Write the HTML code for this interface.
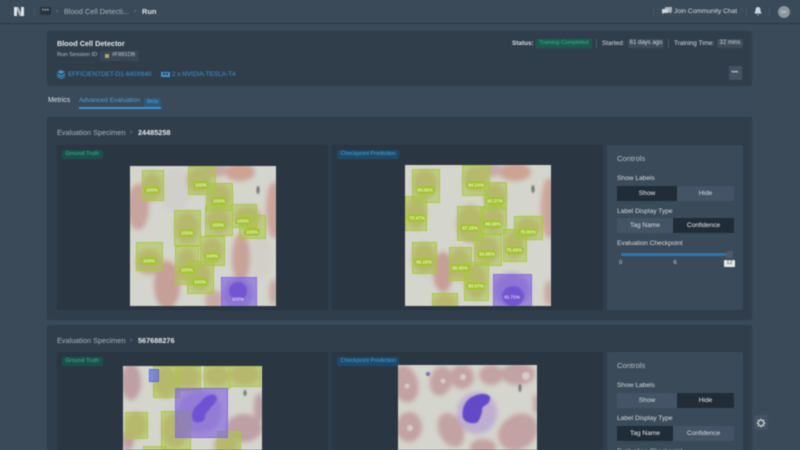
<!DOCTYPE html>
<html><head><meta charset="utf-8">
<style>
*{box-sizing:border-box}
html,body{margin:0;padding:0;width:800px;height:450px;overflow:hidden;background:#3a4a59}
body{font-family:"Liberation Sans",sans-serif;color:#d5dbe0;position:relative}
#w{position:absolute;left:0;top:0;width:800px;height:450px;overflow:hidden;filter:blur(.5px)}
.a{position:absolute}
.t{position:absolute;white-space:nowrap;line-height:1}
.panel{position:absolute;background:#2a3742}
.sec{position:absolute;left:47px;width:705px;background:#303e4c;border-radius:2px}
.tag{position:absolute;border-radius:2px;font-size:5.7px;line-height:9px;height:9px;padding:0 3.5px;white-space:nowrap}
.g{background:#1c4f4b;color:#35b98a}
.bl{background:#1d4a69;color:#4ba3dc}
.ctl{position:absolute;left:607px;width:136px;background:#3a4a59;border-radius:2px}
.seg{position:absolute;height:15px;font-size:6.6px;line-height:15px;text-align:center;color:#d5dbe0;background:#445464}
.on{background:#212c36;color:#e8ecef}
.chip{position:absolute;background:#3f4d5a;border-radius:2px;font-size:6px;color:#cdd4da;line-height:9px;height:9px;text-align:center;white-space:nowrap}
svg{position:absolute;overflow:hidden}
svg text{font-family:"Liberation Sans",sans-serif;font-size:4.6px;fill:#fff;text-anchor:middle}
.sep{position:absolute;width:1px;background:#4a5967}
</style></head><body><div id="w">

<!-- header -->
<div class="a" style="left:0;top:23px;width:800px;height:1px;background:#2c3946"></div>
<svg style="left:13px;top:6px" width="12" height="11" viewBox="0 0 12 11"><path d="M1 1h3v9H1zM8 1h3v9H8z" fill="#dfe3e6"/><path d="M4 1h1.5L8 7v3H6.5L4 4z" fill="#aab3ba"/></svg>
<div class="sep" style="left:34px;top:7px;height:9px"></div>
<div class="a" style="left:40px;top:7px;width:11px;height:8px;background:#28343f;border-radius:1px"></div>
<div class="t" style="left:42px;top:8.5px;font-size:6px;letter-spacing:.3px;color:#aab3bb;line-height:5px">•••</div>
<div class="t" style="left:56px;top:8px;font-size:7px;color:#7c8995">›</div>
<div class="t" style="left:64px;top:7.5px;font-size:7.4px;color:#a9b3bc">Blood Cell Detecti...</div>
<div class="t" style="left:134px;top:8px;font-size:7px;color:#7c8995">›</div>
<div class="t" style="left:142px;top:7.5px;font-size:7.4px;font-weight:bold;color:#dfe4e8">Run</div>

<div class="sep" style="left:653px;top:7px;height:9px"></div>
<svg style="left:662px;top:7px" width="10" height="9" viewBox="0 0 10 9"><path d="M3 0h7v5H9v2L7.5 5.500H3z" fill="#a9b3bc"/><path d="M0 2h6v4H2L.8 7.500V6H0z" fill="#cdd4da"/></svg>
<div class="t" style="left:674px;top:8.5px;font-size:6.6px;color:#d5dbe0">Join Community Chat</div>
<div class="sep" style="left:746px;top:7px;height:9px"></div>
<svg style="left:754px;top:7px" width="8" height="9" viewBox="0 0 8 9"><path d="M4 0C2.200 0 1.500 1.500 1.500 3c0 2-1 2.500-1 3.500h7c0-1-1-1.500-1-3.500C6.500 1.500 5.800 0 4 0zM3 7.200h2L4 8.500z" fill="#cdd4da"/></svg>
<div class="sep" style="left:769px;top:7px;height:9px"></div>
<div class="a" style="left:778px;top:6px;width:12px;height:12px;border-radius:50%;background:#8c969f"></div>
<div class="t" style="left:781px;top:10px;font-size:4px;color:#dfe4e8">SA</div>

<!-- run card -->
<div class="a" style="left:47px;top:31px;width:705px;height:55px;background:#303e4c;border-radius:3px"></div>
<div class="t" style="left:57px;top:40px;font-size:7.3px;font-weight:bold;color:#e4e8eb">Blood Cell Detector</div>
<div class="t" style="left:57px;top:52.5px;font-size:5.8px;color:#b6bfc7">Run Session ID</div>
<div class="a" style="left:100px;top:51px;width:39px;height:10px;background:#3a4754;border-radius:1px"></div>
<div class="a" style="left:105px;top:53.5px;width:4px;height:4px;background:#a9ab6a"></div>
<div class="t" style="left:112px;top:53px;font-size:5.5px;color:#bfc7ce">#F881DB</div>
<svg style="left:57px;top:70px" width="8" height="9" viewBox="0 0 8 9"><path d="M4 0l4 2-4 2-4-2zM0 3.500l4 2 4-2v1.500l-4 2-4-2zM0 6l4 2 4-2v1l-4 2-4-2z" fill="#3f94cd"/></svg>
<div class="t" style="left:68px;top:71.5px;font-size:6.4px;color:#3f94cd">EFFICIENTDET-D1-640X640</div>
<svg style="left:161px;top:71px" width="9" height="7" viewBox="0 0 9 7"><path d="M0 1h9v5H0z" fill="#3f94cd"/><path d="M2 2h2v2H2zM5 2h2v2H5z" fill="#303e4c"/></svg>
<div class="t" style="left:172px;top:71.5px;font-size:6.4px;color:#3f94cd">2 x NVIDIA-TESLA-T4</div>

<div class="t" style="left:512px;top:40.5px;font-size:6.4px;font-weight:bold;color:#d5dbe0">Status:</div>
<div class="a" style="left:536px;top:39px;width:56px;height:9px;background:#1c5a50;border-radius:1px"></div>
<div class="t" style="left:539px;top:41px;font-size:5.7px;color:#35b98a">Training Completed</div>
<div class="sep" style="left:596px;top:39px;height:9px"></div>
<div class="t" style="left:602px;top:40.5px;font-size:6.4px;color:#d5dbe0">Started:</div>
<div class="chip" style="left:628px;top:39px;width:36px;height:9px">61 days ago</div>
<div class="sep" style="left:668px;top:39px;height:9px"></div>
<div class="t" style="left:674px;top:40.5px;font-size:6.4px;color:#d5dbe0">Training Time:</div>
<div class="chip" style="left:717px;top:39px;width:26px;height:9px">32 mins</div>
<div class="a" style="left:729px;top:66px;width:13px;height:14px;background:#445361;border-radius:1px"></div>
<div class="t" style="left:731.5px;top:71px;font-size:6px;letter-spacing:.1px;color:#d5dbe0;line-height:5px">•••</div>

<!-- tabs -->
<div class="t" style="left:48px;top:98px;font-size:6.9px;color:#e0e4e8">Metrics</div>
<div class="t" style="left:79px;top:98px;font-size:6.5px;color:#4ba3dc">Advanced Evaluation</div>
<div class="a" style="left:144px;top:98px;width:17px;height:9px;background:#2e5a7a;border-radius:1px"></div>
<div class="t" style="left:147px;top:99.5px;font-size:5.5px;color:#4ba3dc">Beta</div>
<div class="a" style="left:79px;top:107px;width:82px;height:1.5px;background:#3f94cd"></div>

<!-- section 1 -->
<div class="sec" style="top:117px;height:203px"></div>
<div class="t" style="left:57px;top:129px;font-size:7.3px;color:#a9b3bc">Evaluation Specimen</div>
<div class="t" style="left:130px;top:129px;font-size:7px;color:#7c8995">›</div>
<div class="t" style="left:138px;top:129px;font-size:7.3px;font-weight:bold;color:#e4e8eb">24485258</div>
<div class="panel" style="left:57px;top:145px;width:271px;height:165px"></div>
<div class="panel" style="left:332px;top:145px;width:271px;height:165px"></div>
<div class="tag g" style="left:62px;top:150px">Ground Truth</div>
<div class="tag bl" style="left:337px;top:150px">Checkpoint Prediction</div>

<svg style="left:130px;top:166px" width="146" height="140" viewBox="130 166 146 140">
<defs>
<filter id="b" x="-40%" y="-40%" width="180%" height="180%"><feGaussianBlur stdDeviation="2.400"/></filter>
<filter id="c" x="-30%" y="-30%" width="160%" height="160%"><feGaussianBlur stdDeviation=".8"/></filter>
</defs>
<rect x="130" y="166" width="146" height="140" fill="#d4d5cc"/>
<g filter="url(#b)" fill="#c8aaa4">
<ellipse cx="175" cy="190" rx="16" ry="22" fill="#d1cfca"/>
<ellipse cx="260" cy="258" rx="12" ry="22" fill="#d2cfc9"/>
<ellipse cx="138" cy="207" rx="11" ry="23" fill="#c8a49e"/>
<ellipse cx="240" cy="172" rx="15" ry="9" fill="#cda393"/>
<ellipse cx="274" cy="210" rx="8" ry="28" fill="#cba59a"/>
<ellipse cx="215" cy="170" rx="14" ry="7"/>
<ellipse cx="241" cy="258" rx="9" ry="25" fill="#c9a39a"/>
<ellipse cx="167" cy="285" rx="13" ry="24" fill="#c59f98"/>
<ellipse cx="274" cy="292" rx="5" ry="13"/>
<ellipse cx="214" cy="300" rx="9" ry="10"/>
<ellipse cx="149" cy="262" rx="13" ry="13" fill="#c4aa96"/>
<ellipse cx="152" cy="187" rx="10" ry="14" fill="#c4aa96"/>
<ellipse cx="199" cy="180" rx="12" ry="13" fill="#c4aa96"/>
<ellipse cx="219" cy="197" rx="12" ry="13" fill="#c4aa96"/>
<ellipse cx="187" cy="228" rx="12" ry="16" fill="#c4aa96"/>
<ellipse cx="218" cy="221" rx="12" ry="13" fill="#c4aa96"/>
<ellipse cx="248" cy="217" rx="13" ry="11" fill="#c4aa96"/>
<ellipse cx="212" cy="251" rx="11" ry="13" fill="#c4aa96"/>
<ellipse cx="187" cy="265" rx="10" ry="17" fill="#c4aa96"/>
<ellipse cx="200" cy="277" rx="11" ry="14" fill="#c4aa96"/>
<ellipse cx="238" cy="294" rx="15" ry="16" fill="#a99cc8"/>
</g>
<ellipse cx="238" cy="291" rx="9" ry="9" fill="#6a4cc4" filter="url(#c)"/>
<ellipse cx="258" cy="190" rx="1.500" ry="4" fill="#6b6f70" filter="url(#c)"/>
<g fill="#abc54a" fill-opacity=".55" stroke="#abc83f" stroke-width="1">
<rect x="142.5" y="170.5" width="21" height="30"/><rect x="188.5" y="166.5" width="27" height="28"/><rect x="206.5" y="183.5" width="26" height="27"/><rect x="174.5" y="210.5" width="26" height="35"/><rect x="205.5" y="205.5" width="27" height="30"/><rect x="232.5" y="204.5" width="24" height="23"/><rect x="239.5" y="215.5" width="26" height="23"/><rect x="136.5" y="242.5" width="26" height="28"/><rect x="200.5" y="236.5" width="24" height="29"/><rect x="175.5" y="246.5" width="23" height="38"/><rect x="187.5" y="261.5" width="26" height="32"/>
<rect x="221.5" y="277.5" width="35" height="29" fill="#7a5bdc" fill-opacity=".6" stroke="#8a6ce6"/>
</g>
<g fill="#a5c433">
<rect x="144" y="186" width="16" height="8" rx="4"/><rect x="193" y="181" width="16" height="8" rx="4"/><rect x="211" y="197" width="16" height="8" rx="4"/><rect x="179" y="229" width="16" height="8" rx="4"/><rect x="210" y="221" width="16" height="8" rx="4"/><rect x="235" y="217" width="16" height="8" rx="4"/><rect x="244" y="228" width="16" height="8" rx="4"/><rect x="141" y="257" width="16" height="8" rx="4"/><rect x="204" y="252" width="16" height="8" rx="4"/><rect x="179" y="266" width="16" height="8" rx="4"/><rect x="192" y="278" width="16" height="8" rx="4"/>
</g>
<text x="152" y="191.5">100%</text><text x="201" y="186.5">100%</text><text x="219" y="202.5">100%</text><text x="187" y="234.5">100%</text><text x="218" y="226.5">100%</text><text x="243" y="222.5">100%</text><text x="252" y="233.5">100%</text><text x="149" y="262.5">100%</text><text x="212" y="257.5">100%</text><text x="187" y="271.5">100%</text><text x="200" y="283.5">100%</text><text x="238" y="300.5">100%</text>
</svg>

<svg style="left:405px;top:165px" width="146" height="141" viewBox="405 165 146 141">
<rect x="405" y="165" width="146" height="141" fill="#d4d5cc"/>
<g filter="url(#b)" fill="#c4aa96">
<ellipse cx="425" cy="184" rx="12" ry="14"/>
<ellipse cx="476" cy="179" rx="12" ry="13"/>
<ellipse cx="495" cy="196" rx="11" ry="12"/>
<ellipse cx="416" cy="213" rx="10" ry="16"/>
<ellipse cx="470" cy="224" rx="13" ry="19"/>
<ellipse cx="493" cy="220" rx="11" ry="13"/>
<ellipse cx="528" cy="228" rx="12" ry="10"/>
<ellipse cx="514" cy="245" rx="10" ry="14"/>
<ellipse cx="487" cy="250" rx="12" ry="14"/>
<ellipse cx="424" cy="258" rx="12" ry="15"/>
<ellipse cx="460" cy="264" rx="10" ry="16"/>
<ellipse cx="476" cy="282" rx="11" ry="17"/>
<ellipse cx="443" cy="272" rx="10" ry="20" fill="#c59f98"/>
<ellipse cx="445" cy="302" rx="12" ry="8"/>
<ellipse cx="515" cy="172" rx="16" ry="9" fill="#cda393"/>
<ellipse cx="549" cy="208" rx="8" ry="30" fill="#cba59a"/>
<ellipse cx="490" cy="170" rx="14" ry="7" fill="#c8aaa4"/>
<ellipse cx="512" cy="290" rx="18" ry="17" fill="#a99cc8"/>
<ellipse cx="549" cy="293" rx="5" ry="13" fill="#c8aaa4"/>
</g>
<ellipse cx="513" cy="296" rx="11" ry="10" fill="#6a4cc4" filter="url(#c)"/>
<ellipse cx="533" cy="189" rx="1.500" ry="4" fill="#6b6f70" filter="url(#c)"/>
<g fill="#abc54a" fill-opacity=".55" stroke="#abc83f" stroke-width="1">
<rect x="412.5" y="169.5" width="27" height="33"/><rect x="462.5" y="165.5" width="27" height="30"/><rect x="484.5" y="182.5" width="22" height="27"/><rect x="405.5" y="196.5" width="21" height="34"/><rect x="457.5" y="206.5" width="26" height="34"/><rect x="480.5" y="206.5" width="26" height="27"/><rect x="514.5" y="216.5" width="28" height="23"/><rect x="503.5" y="229.5" width="23" height="32"/><rect x="474.5" y="234.5" width="27" height="31"/><rect x="412.5" y="242.5" width="24" height="31"/><rect x="449.5" y="247.5" width="22" height="33"/><rect x="464.5" y="262.5" width="24" height="38"/><rect x="432.5" y="293.5" width="25" height="14"/>
<rect x="493.5" y="274.5" width="38" height="33" fill="#7a5bdc" fill-opacity=".6" stroke="#8a6ce6"/>
</g>
<g fill="#a5c433">
<rect x="416" y="186" width="19" height="8" rx="4"/><rect x="466" y="181" width="19" height="8" rx="4"/><rect x="486" y="197" width="19" height="8" rx="4"/><rect x="407" y="214" width="19" height="8" rx="4"/><rect x="460" y="224" width="19" height="8" rx="4"/><rect x="483" y="220" width="19" height="8" rx="4"/><rect x="518" y="228" width="19" height="8" rx="4"/><rect x="505" y="246" width="19" height="8" rx="4"/><rect x="477" y="250" width="19" height="8" rx="4"/><rect x="414" y="258" width="19" height="8" rx="4"/><rect x="451" y="264" width="19" height="8" rx="4"/><rect x="466" y="282" width="19" height="8" rx="4"/>
</g>
<text x="425" y="191.5">89.58%</text><text x="476" y="186.5">94.14%</text><text x="495" y="202.5">90.27%</text><text x="417" y="219.5">70.47%</text><text x="470" y="229.5">87.18%</text><text x="493" y="225.5">86.58%</text><text x="528" y="233.5">78.80%</text><text x="514" y="251.5">75.44%</text><text x="487" y="255.5">94.85%</text><text x="424" y="263.5">95.18%</text><text x="460" y="269.5">85.60%</text><text x="476" y="287.5">93.07%</text><text x="512" y="298.5">91.71%</text>
</svg>

<div class="ctl" style="top:145px;height:165px"></div>
<div class="t" style="left:617px;top:154.5px;font-size:7.6px;color:#b6bfc7">Controls</div>
<div class="t" style="left:617px;top:176px;font-size:6.6px;color:#d5dbe0">Show Labels</div>
<div class="seg on" style="left:617px;top:186px;width:60px">Show</div>
<div class="seg" style="left:677px;top:186px;width:57px">Hide</div>
<div class="t" style="left:617px;top:208.5px;font-size:6.6px;color:#d5dbe0">Label Display Type</div>
<div class="seg" style="left:617px;top:218px;width:56px">Tag Name</div>
<div class="seg on" style="left:673px;top:218px;width:61px">Confidence</div>
<div class="t" style="left:617px;top:241px;font-size:6.6px;color:#d5dbe0">Evaluation Checkpoint</div>
<div class="a" style="left:621px;top:253px;width:105px;height:3px;background:#2a78b4;border-radius:1px"></div>
<div class="a" style="left:726px;top:251px;width:7px;height:7px;background:#4a5a68;border-radius:1px"></div>
<div class="t" style="left:619px;top:261px;font-size:5.8px;color:#d5dbe0">0</div>
<div class="t" style="left:673.5px;top:261px;font-size:5.8px;color:#d5dbe0">6</div>
<div class="a" style="left:724px;top:260px;width:11px;height:7px;background:#e6e9ec;border-radius:1px;color:#3a4a59;font-size:5.6px;line-height:7px;text-align:center">12</div>

<!-- section 2 -->
<div class="sec" style="top:325px;height:125px"></div>
<div class="t" style="left:57px;top:336.5px;font-size:7.3px;color:#a9b3bc">Evaluation Specimen</div>
<div class="t" style="left:130px;top:336.5px;font-size:7px;color:#7c8995">›</div>
<div class="t" style="left:138px;top:336.5px;font-size:7.3px;font-weight:bold;color:#e4e8eb">567688276</div>
<div class="panel" style="left:57px;top:352px;width:271px;height:98px"></div>
<div class="panel" style="left:332px;top:352px;width:271px;height:98px"></div>
<div class="tag g" style="left:62px;top:357px">Ground Truth</div>

<svg style="left:123px;top:366px" width="139" height="84" viewBox="123 366 139 84">
<rect x="123" y="366" width="139" height="84" fill="#d4d5cc"/>
<g filter="url(#b)" fill="#c4aa96">
<ellipse cx="131" cy="382" rx="10" ry="18" fill="#bd9fa4"/>
<ellipse cx="166" cy="382" rx="12" ry="16"/>
<ellipse cx="188" cy="377" rx="12" ry="12"/>
<ellipse cx="217" cy="376" rx="13" ry="10"/>
<ellipse cx="245" cy="375" rx="15" ry="10"/>
<ellipse cx="136" cy="425" rx="11" ry="13"/>
<ellipse cx="175" cy="430" rx="13" ry="18"/>
<ellipse cx="244" cy="428" rx="18" ry="14" fill="#bd9fa4"/>
<ellipse cx="226" cy="445" rx="12" ry="10"/>
<ellipse cx="259" cy="408" rx="5" ry="15" fill="#bd9fa4"/>
<ellipse cx="128" cy="440" rx="6" ry="10" fill="#bd9fa4"/>
<ellipse cx="200" cy="412" rx="22" ry="21" fill="#b8aacc"/>
</g>
<path d="M193 420c-3-8 2-14 7-17 3-5 10-10 15-8 4 3 1 8-3 11-3 3-4 6-7 8 1 4-1 8-5 8-3 1-6 0-7-2z" fill="#5f44c8" filter="url(#c)"/>
<ellipse cx="245" cy="393" rx="1.500" ry="3" fill="#6b6f70" filter="url(#c)"/>
<g fill="#abc54a" fill-opacity=".55" stroke="#abc83f" stroke-width="1">
<rect x="153.5" y="366.5" width="26" height="31"/><rect x="175.5" y="366.5" width="25" height="24"/><rect x="204.5" y="366.5" width="25" height="22"/><rect x="229.5" y="366.5" width="31" height="20"/><rect x="125.5" y="412.5" width="22" height="26"/><rect x="161.5" y="411.5" width="29" height="38"/><rect x="217.5" y="431.5" width="23" height="20"/><rect x="143.5" y="446.5" width="23" height="6"/>
<rect x="175.5" y="388.5" width="52" height="49" fill="#7a5bdc" fill-opacity=".6" stroke="#8a6ce6"/>
<rect x="149.5" y="369.5" width="9" height="12" fill="#5a66e8" fill-opacity=".65" stroke="#5a66ee"/>
</g>
</svg>

<div class="tag bl" style="left:337px;top:357px">Checkpoint Prediction</div>
<svg style="left:398px;top:365px" width="139" height="85" viewBox="398 365 139 85">
<rect x="398" y="365" width="139" height="85" fill="#d4d5cc"/>
<g filter="url(#b)" fill="#c2a2a2">
<ellipse cx="405" cy="384" rx="13" ry="19" transform="rotate(-15 405 384)"/>
<ellipse cx="441" cy="381" rx="11" ry="15" transform="rotate(12 441 381)"/>
<ellipse cx="462" cy="377" rx="12" ry="12"/>
<ellipse cx="491" cy="375" rx="12" ry="10"/>
<ellipse cx="518" cy="374" rx="17" ry="11"/>
<ellipse cx="536" cy="404" rx="3" ry="10"/>
<ellipse cx="409" cy="427" rx="13" ry="15"/>
<ellipse cx="451" cy="430" rx="12" ry="18" transform="rotate(-25 451 430)"/>
<ellipse cx="518" cy="432" rx="21" ry="17" transform="rotate(-35 518 432)"/>
<ellipse cx="483" cy="447" rx="13" ry="8"/>
<ellipse cx="477" cy="413" rx="20" ry="21" fill="#bfaed0"/>
</g>
<path d="M463 418c-2-10 3-19 11-22 6-3 14-3 16 1 1 4-3 8-6 9-3 2-1 6-3 9-1 4-3 8-6 8-5 1-10-1-12-5z" fill="#6248c8" filter="url(#c)"/>
<g filter="url(#c)" fill="#d6cdc6">
<circle cx="443" cy="381" r="2.5"/><circle cx="463" cy="377" r="3"/><circle cx="407" cy="386" r="2.5"/><circle cx="526" cy="376" r="4"/><circle cx="410" cy="428" r="3"/>
</g>
<circle cx="428" cy="374" r="2.2" fill="#8c70c8"/>
<ellipse cx="520" cy="388" rx="1.5" ry="4" fill="#70777a" filter="url(#c)"/>
</svg>

<div class="ctl" style="top:352px;height:98px"></div>
<div class="t" style="left:617px;top:362px;font-size:7.6px;color:#b6bfc7">Controls</div>
<div class="t" style="left:617px;top:383px;font-size:6.6px;color:#d5dbe0">Show Labels</div>
<div class="seg" style="left:617px;top:393px;width:60px">Show</div>
<div class="seg on" style="left:677px;top:393px;width:57px">Hide</div>
<div class="t" style="left:617px;top:416px;font-size:6.6px;color:#d5dbe0">Label Display Type</div>
<div class="seg on" style="left:617px;top:426px;width:56px">Tag Name</div>
<div class="seg" style="left:673px;top:426px;width:61px">Confidence</div>
<div class="t" style="left:617px;top:448.5px;font-size:6.6px;color:#d5dbe0">Evaluation Checkpoint</div>

<!-- gear -->
<div class="a" style="left:754px;top:415px;width:14px;height:15px;background:#445361;border-radius:2px"></div>
<svg style="left:756px;top:418px" width="10" height="10" viewBox="0 0 10 10"><circle cx="5" cy="5" r="2.800" fill="none" stroke="#bcc5cc" stroke-width="1.500"/><path d="M5 .5v1.500M5 8v1.500M.5 5H2M8 5h1.500M1.800 1.800l1 1M7.200 7.200l1 1M8.200 1.800l-1 1M2.800 7.200l-1 1" stroke="#bcc5cc" stroke-width="1.200"/></svg>

</div></body></html>
